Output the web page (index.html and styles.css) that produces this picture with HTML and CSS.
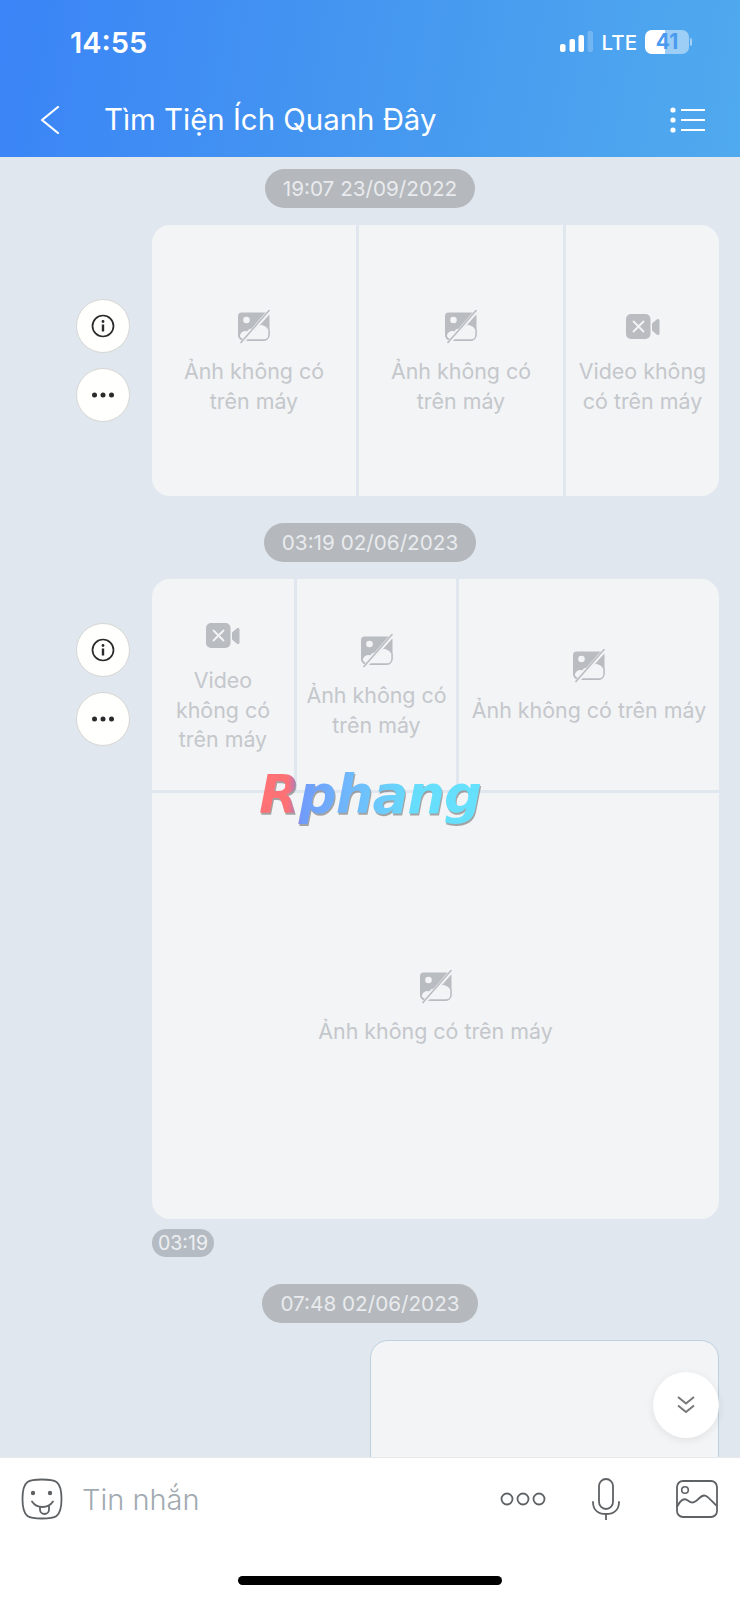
FILE: index.html
```html
<!DOCTYPE html>
<html lang="vi">
<head>
    <meta charset="UTF-8">
    <title>Tìm Tiện Ích Quanh Đây</title>
    <link rel="stylesheet" href="styles.css">
</head>
<body>
<svg class="defs" width="0" height="0">
    <symbol id="photoOff" viewBox="0 0 34 34">
        <path d="M5 2.500h24a3.500 3.500 0 0 1 3.500 3.500v19a6 6 0 0 1-6 6H7a6 6 0 0 1-6-6V6a3.500 3.500 0 0 1 3.500-3.500z" fill="#b9bdc2"/>
        <path d="M9 30c-3 0-6-1.500-7-4 1-4 4-6 8-5.500 2-3 5-3 8-1 2-4 5-6 8-5 3 1 5 3 6 5v5c0 3-2 5.500-5 5.500z" fill="#f3f4f6" stroke="#b9bdc2" stroke-width="1.400"/>
        <circle cx="9.500" cy="10" r="3.300" fill="#f3f4f6"/>
        <path d="M33 .5L5 32.500" stroke="#f3f4f6" stroke-width="4"/>
        <path d="M32.500 0L3.500 33" stroke="#b9bdc2" stroke-width="1.600"/>
    </symbol>
    <symbol id="videoOff" viewBox="0 0 34 26">
        <rect x="0" y="0" width="24.500" height="25" rx="5" fill="#b9bdc2"/>
        <path d="M26 9.500l5-4.200c1-.8 2.500-.2 2.500 1.200v13c0 1.400-1.500 2-2.500 1.200l-5-4.200z" fill="#b9bdc2"/>
        <path d="M7.500 7.500l10 10M17.500 7.500l-10 10" stroke="#f3f4f6" stroke-width="1.800" stroke-linecap="round"/>
    </symbol>
    <symbol id="infoIcon" viewBox="0 0 24 24">
        <circle cx="12" cy="12" r="10.500" fill="none" stroke="#2a2a2c" stroke-width="1.700"/>
        <circle cx="12" cy="7.500" r="1.400" fill="#2a2a2c"/>
        <path d="M12 10.500v7" stroke="#2a2a2c" stroke-width="2.400"/>
    </symbol>
    <symbol id="moreIcon" viewBox="0 0 24 8">
        <circle cx="3.500" cy="4" r="2.500" fill="#2a2a2c"/>
        <circle cx="12" cy="4" r="2.500" fill="#2a2a2c"/>
        <circle cx="20.500" cy="4" r="2.500" fill="#2a2a2c"/>
    </symbol>
</svg>

<div class="app">
    <header class="top">
        <div class="status-bar">
            <span class="clock">14:55</span>
            <div class="status-right">
                <svg class="signal" width="33" height="22" viewBox="0 0 33 22">
                    <rect x="0" y="13" width="5.500" height="8" rx="2" fill="#fff"/>
                    <rect x="9.500" y="8" width="5.500" height="13" rx="2" fill="#fff"/>
                    <rect x="18.500" y="4" width="5.500" height="17" rx="2" fill="#fff"/>
                    <rect x="27.500" y="0" width="5.500" height="21" rx="2" fill="#fff" opacity=".22"/>
                </svg>
                <span class="lte">LTE</span>
                <div class="battery">
                    <span class="battery-fill"></span>
                    <span class="battery-num">41</span>
                </div>
                <span class="battery-nub"></span>
            </div>
        </div>
        <nav class="nav">
            <svg class="back" width="20" height="28" viewBox="0 0 20 28">
                <path d="M18 1L2 14l16 13" fill="none" stroke="#fff" stroke-width="2.200" stroke-linecap="round" stroke-linejoin="round"/>
            </svg>
            <h1 class="title">Tìm Tiện Ích Quanh Đây</h1>
            <svg class="menu" width="35" height="26" viewBox="0 0 35 26">
                <circle cx="3" cy="3" r="2.600" fill="#fff"/>
                <circle cx="3" cy="13" r="2.600" fill="#fff"/>
                <circle cx="3" cy="23" r="2.600" fill="#fff"/>
                <path d="M11 3h24M11 13h24M11 23h24" stroke="#fff" stroke-width="2"/>
            </svg>
        </nav>
    </header>

    <main class="chat">
        <div class="date-pill date-first">19:07 23/09/2022</div>
        <div class="msg">
            <div class="actions actions-a">
                <button class="round"><svg width="24" height="24"><use href="#infoIcon"/></svg></button>
                <button class="round"><svg width="24" height="8"><use href="#moreIcon"/></svg></button>
            </div>
            <div class="album album-a">
                <div class="cell"><svg class="ic-media"><use href="#photoOff"/></svg><p>Ảnh không có trên máy</p></div>
                <div class="cell"><svg class="ic-media"><use href="#photoOff"/></svg><p>Ảnh không có trên máy</p></div>
                <div class="cell"><svg class="ic-media"><use href="#videoOff"/></svg><p>Video không có trên máy</p></div>
            </div>
        </div>

        <div class="date-pill">03:19 02/06/2023</div>
        <div class="msg">
            <div class="actions actions-b">
                <button class="round"><svg width="24" height="24"><use href="#infoIcon"/></svg></button>
                <button class="round"><svg width="24" height="8"><use href="#moreIcon"/></svg></button>
            </div>
            <div class="album album-b">
                <div class="cell"><svg class="ic-media"><use href="#videoOff"/></svg><p>Video không có trên máy</p></div>
                <div class="cell"><svg class="ic-media"><use href="#photoOff"/></svg><p>Ảnh không có trên máy</p></div>
                <div class="cell"><svg class="ic-media"><use href="#photoOff"/></svg><p>Ảnh không có trên máy</p></div>
                <div class="cell cell-wide"><svg class="ic-media"><use href="#photoOff"/></svg><p>Ảnh không có trên máy</p></div>
            </div>
        </div>
        <div class="time-chip">03:19</div>

        <div class="date-pill">07:48 02/06/2023</div>
        <div class="msg">
            <div class="own-bubble"></div>
        </div>

        <!-- sits over the chat -->
        <div class="watermark">Rphang</div>
        <button class="scroll-down">
            <svg width="20" height="20" viewBox="0 0 20 20">
                <path d="M2 2l8 6.500L18 2M2 10.500l8 6.500 8-6.500" fill="none" stroke="#77787a" stroke-width="2"/>
            </svg>
        </button>
    </main>

    <footer class="composer">
        <div class="input-row">
            <svg class="smile" width="42" height="42" viewBox="0 0 42 42">
                <path d="M21 1.500c-6 0-11 0-14.500 2.500C2.500 7 1.500 12 1.500 21s1 14 5 17c3.500 2.500 8.500 2.500 14.500 2.500s11 0 14.500-2.500c4-3 5-8 5-17s-1-14-5-17C32 1.500 27 1.500 21 1.500z" fill="none" stroke="#5f6265" stroke-width="1.800"/>
                <circle cx="12" cy="15" r="2.200" fill="#5f6265"/>
                <circle cx="29" cy="15" r="2.200" fill="#5f6265"/>
                <path d="M11 23.500c3 4.500 7 5.500 10.500 5.500s7.500-1 10.500-5.500" fill="none" stroke="#5f6265" stroke-width="1.800" stroke-linecap="round"/>
                <path d="M19 29v2.500a4.500 4.500 0 0 0 9 0v-3.500" fill="none" stroke="#5f6265" stroke-width="1.800"/>
            </svg>
            <span class="placeholder">Tin nhắn</span>
            <svg class="dots" width="46" height="16" viewBox="0 0 46 16">
                <circle cx="7" cy="8" r="5.500" fill="none" stroke="#5f6265" stroke-width="1.800"/>
                <circle cx="23" cy="8" r="5.500" fill="none" stroke="#5f6265" stroke-width="1.800"/>
                <circle cx="39" cy="8" r="5.500" fill="none" stroke="#5f6265" stroke-width="1.800"/>
            </svg>
            <svg class="mic" width="30" height="42" viewBox="0 0 30 42">
                <rect x="8" y="1" width="14" height="30" rx="7" fill="none" stroke="#5f6265" stroke-width="1.800"/>
                <path d="M2 24c0 8 5.500 12 13 12s13-4 13-12M15 36v6" fill="none" stroke="#5f6265" stroke-width="1.800" stroke-linecap="round"/>
            </svg>
            <svg class="pic" width="42" height="38" viewBox="0 0 42 38">
                <rect x="1" y="1" width="40" height="36" rx="6" fill="none" stroke="#5f6265" stroke-width="1.800"/>
                <circle cx="9" cy="10" r="3.300" fill="none" stroke="#5f6265" stroke-width="1.600"/>
                <path d="M1 27c3-7 7-9 10-7s5 4 9 1 6-7 10-5 8 8 11 10" fill="none" stroke="#5f6265" stroke-width="1.800"/>
            </svg>
        </div>
        <div class="home-indicator"></div>
    </footer>
</div>
</body>
</html>
```

FILE: styles.css
```css
/* Page */
body {
    margin: 0;
    font-family: Inter, "Noto Sans", sans-serif;
    background-color: #fff;
}

.defs {
    display: block;
    height: 0;
}

.app {
    display: flex;
    flex-direction: column;
    width: 740px;
    height: 1600px;
    overflow: hidden;
}

/* Blue header */
.top {
    height: 157px;
    flex-shrink: 0;
    color: #fff;
    background: linear-gradient(100deg, #3a84f7 0%, #4597f0 50%, #50aaee 100%);
}

.status-bar {
    display: flex;
    justify-content: space-between;
    align-items: center;
    height: 84px;
    padding: 0 48px 0 70px;
}

.clock {
    font-size: 29px;
    font-weight: 600;
}

.status-right {
    display: flex;
    align-items: center;
}

.signal {
    margin-right: 9px;
}

.lte {
    font-size: 20.5px;
    font-weight: 500;
    margin-right: 8px;
}

.battery {
    position: relative;
    width: 44px;
    height: 24px;
    border-radius: 7px;
    overflow: hidden;
    background-color: rgba(255, 255, 255, 0.45);
}

.battery-fill {
    display: block;
    width: 20px;
    height: 100%;
    background-color: #fff;
}

.battery-num {
    position: absolute;
    left: 0;
    right: 0;
    top: 0;
    line-height: 24px;
    text-align: center;
    font-size: 21px;
    font-weight: 700;
    color: #4a9bf0;
}

.battery-nub {
    width: 2px;
    height: 8px;
    margin-left: 1px;
    border-radius: 0 2px 2px 0;
    background-color: rgba(255, 255, 255, 0.5);
}

.nav {
    display: flex;
    align-items: center;
    height: 71px;
    padding: 0 35px 2px 40px;
}

.back {
    flex-shrink: 0;
}

.title {
    flex: 1;
    margin: 0 0 0 44px;
    font-size: 29.4px;
    font-weight: 400;
}

/* Chat */
.chat {
    position: relative;
    flex: 1;
    min-height: 0;
    overflow: hidden;
    display: flex;
    flex-direction: column;
    padding: 0 21px 0 0;
    background-color: #e1e7ef;
}

.date-pill {
    align-self: center;
    margin: 27px 0 17px 21px;
    padding: 0 18px;
    height: 39px;
    line-height: 39px;
    border-radius: 20px;
    font-size: 20.7px;
    color: #e9ebee;
    background-color: #b5b9bd;
}

.date-first {
    margin-top: 12px;
}

.msg {
    display: flex;
    justify-content: flex-end;
    gap: 22px;
    flex-shrink: 0;
}

.actions {
    display: flex;
    flex-direction: column;
    justify-content: center;
    gap: 15px;
}

.actions-a {
    height: 271px;
}

.actions-b {
    height: 211px;
}

.round {
    display: flex;
    align-items: center;
    justify-content: center;
    width: 54px;
    height: 54px;
    padding: 0;
    border: 1px solid #d6d6d4;
    border-radius: 50%;
    background-color: #fffffd;
}

.album {
    display: grid;
    gap: 3px;
    width: 567px;
    border-radius: 18px;
    overflow: hidden;
}

.album-a {
    grid-template-columns: 204px 204px 153px;
    height: 271px;
}

.album-a p {
    max-width: 150px;
}

.album-b {
    grid-template-columns: 142px 159px 260px;
    grid-template-rows: 211px 426px;
    height: 640px;
}

.cell {
    display: flex;
    flex-direction: column;
    align-items: center;
    justify-content: center;
    padding: 5px 8px 0;
    background-color: #f3f4f6;
}

.cell-wide {
    grid-column: 1 / 4;
}

.cell p {
    margin: 13px 0 0;
    font-size: 21.4px;
    line-height: 29.5px;
    text-align: center;
    color: #c4c7cb;
}

.ic-media {
    width: 34px;
    height: 34px;
}

.time-chip {
    align-self: flex-start;
    margin: 10px 0 0 152px;
    padding: 0 6px;
    height: 28px;
    line-height: 28px;
    border-radius: 14px;
    font-size: 19.5px;
    color: #eef0f3;
    background-color: #b5bbc2;
}

.own-bubble {
    width: 347px;
    height: 140px;
    flex-shrink: 0;
    border: 1px solid #bcd0de;
    border-radius: 18px;
    background-color: #f3f4f6;
}

.watermark {
    position: absolute;
    left: 259px;
    top: 605px;
    font-family: "DejaVu Sans", sans-serif;
    font-size: 53px;
    line-height: 66px;
    font-weight: 700;
    font-style: italic;
    letter-spacing: -1px;
    color: transparent;
    background: linear-gradient(90deg, #ff6a6f 0%, #ff6a6f 13%, #a975c0 17%, #6a97fb 19%, #68bcfd 45%, #5fdcfd 70%, #5fe0fd 100%);
    -webkit-background-clip: text;
    background-clip: text;
    filter: drop-shadow(1px 2px 0 rgba(90, 90, 90, 0.55));
    opacity: 0.95;
}

.scroll-down {
    position: absolute;
    left: 653px;
    top: 1215px;
    display: flex;
    align-items: center;
    justify-content: center;
    width: 66px;
    height: 66px;
    padding: 0;
    border: none;
    border-radius: 50%;
    background-color: #fff;
    box-shadow: 0 2px 8px rgba(0, 0, 0, 0.08);
}

/* Bottom bar */
.composer {
    position: relative;
    height: 142px;
    flex-shrink: 0;
    border-top: 1px solid #e6e8ea;
    background-color: #fff;
}

.input-row {
    display: flex;
    align-items: center;
    height: 82px;
    padding: 0 22px 0 21px;
}

.placeholder {
    flex: 1;
    margin-left: 19px;
    font-size: 29px;
    font-weight: 300;
    color: #a2aab1;
}

.mic {
    margin: 0 55px 0 45px;
}

.home-indicator {
    width: 264px;
    height: 9px;
    margin: 36px auto 0;
    border-radius: 5px;
    background-color: #000;
}
```
